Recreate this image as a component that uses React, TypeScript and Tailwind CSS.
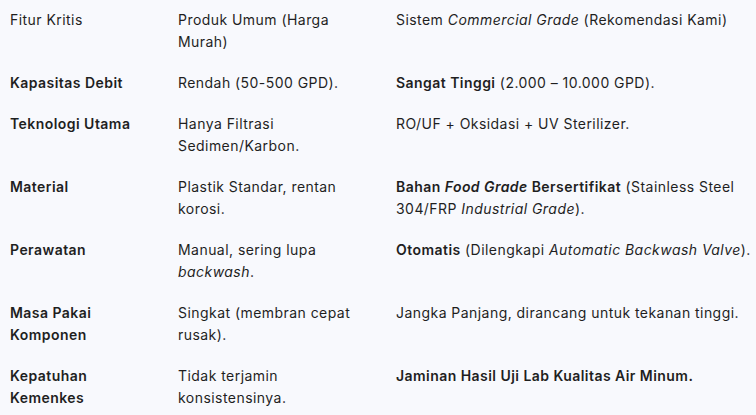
import React from "react";

type Row = { a: React.ReactNode; b: React.ReactNode; c: React.ReactNode; header?: boolean };

const rows: Row[] = [
  {
    header: true,
    a: "Fitur Kritis",
    b: "Produk Umum (Harga Murah)",
    c: (
      <>
        Sistem <em>Commercial Grade</em> (Rekomendasi Kami)
      </>
    ),
  },
  {
    a: "Kapasitas Debit",
    b: "Rendah (50-500 GPD).",
    c: (
      <>
        <strong className="font-semibold">Sangat Tinggi</strong> (2.000 – 10.000 GPD).
      </>
    ),
  },
  {
    a: "Teknologi Utama",
    b: "Hanya Filtrasi Sedimen/Karbon.",
    c: "RO/UF + Oksidasi + UV Sterilizer.",
  },
  {
    a: "Material",
    b: "Plastik Standar, rentan korosi.",
    c: (
      <>
        <strong className="font-semibold">
          Bahan <em>Food Grade</em> Bersertifikat
        </strong>{" "}
        (Stainless Steel 304/FRP <em>Industrial Grade</em>).
      </>
    ),
  },
  {
    a: "Perawatan",
    b: (
      <>
        Manual, sering lupa <em>backwash</em>.
      </>
    ),
    c: (
      <>
        <strong className="font-semibold">Otomatis</strong> (Dilengkapi <em>Automatic Backwash Valve</em>).
      </>
    ),
  },
  {
    a: "Masa Pakai Komponen",
    b: "Singkat (membran cepat rusak).",
    c: "Jangka Panjang, dirancang untuk tekanan tinggi.",
  },
  {
    a: "Kepatuhan Kemenkes",
    b: "Tidak terjamin konsistensinya.",
    c: <strong className="font-semibold">Jaminan Hasil Uji Lab Kualitas Air Minum.</strong>,
  },
];

export default function App() {
  return (
    <div
      className="w-[756px] h-[415px] overflow-hidden bg-[#f8f9fd] text-[#1f1f1f] text-[14px] leading-[22px] tracking-[0.45px]"
      style={{ fontFamily: "Inter, sans-serif" }}
    >
      <div className="grid grid-cols-[168px_218px_1fr]">
        {rows.map((r, i) => (
          <React.Fragment key={i}>
            <div className={`pl-[10px] pr-[12px] pt-[9px] pb-[10px] ${r.header ? "" : "font-semibold"}`}>{r.a}</div>
            <div className="pl-[10px] pr-[12px] pt-[9px] pb-[10px]">{r.b}</div>
            <div className="pl-[10px] pr-[2px] pt-[9px] pb-[10px]">{r.c}</div>
          </React.Fragment>
        ))}
      </div>
    </div>
  );
}
